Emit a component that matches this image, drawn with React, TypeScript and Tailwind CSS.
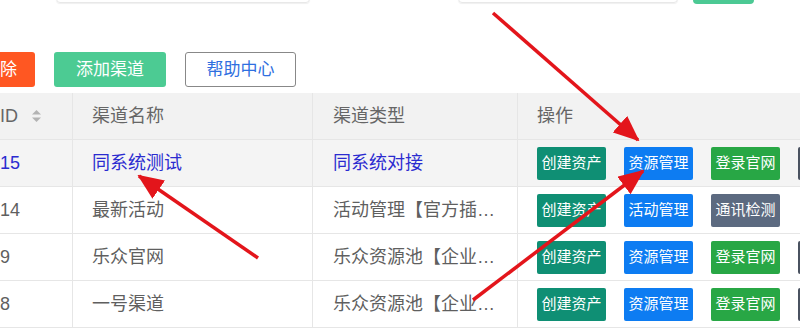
import React from "react";

type Btn = { label: string; color: string };

type Row = {
  id: string;
  name: string;
  type: string;
  active?: boolean;
  actions: Btn[];
  extra?: boolean;
};

const TEAL = "bg-[#0f8f74]";
const BLUE = "bg-[#0d7cf2]";
const GREEN = "bg-[#28a745]";
const SLATE = "bg-[#5c6a80]";

const rows: Row[] = [
  {
    id: "15",
    name: "同系统测试",
    type: "同系统对接",
    active: true,
    actions: [
      { label: "创建资产", color: TEAL },
      { label: "资源管理", color: BLUE },
      { label: "登录官网", color: GREEN },
    ],
    extra: true,
  },
  {
    id: "14",
    name: "最新活动",
    type: "活动管理【官方插件】",
    actions: [
      { label: "创建资产", color: TEAL },
      { label: "活动管理", color: BLUE },
      { label: "通讯检测", color: SLATE },
    ],
  },
  {
    id: "9",
    name: "乐众官网",
    type: "乐众资源池【企业版】",
    actions: [
      { label: "创建资产", color: TEAL },
      { label: "资源管理", color: BLUE },
      { label: "登录官网", color: GREEN },
    ],
    extra: true,
  },
  {
    id: "8",
    name: "一号渠道",
    type: "乐众资源池【企业版】",
    actions: [
      { label: "创建资产", color: TEAL },
      { label: "资源管理", color: BLUE },
      { label: "登录官网", color: GREEN },
    ],
    extra: true,
  },
];

function SortIcon() {
  return (
    <svg width="11" height="14" viewBox="0 0 11 14" className="ml-[13px]">
      <path d="M5.5 1 L10 5.5 H1 Z" fill="#b3b3b3" />
      <path d="M5.5 13 L10 8.5 H1 Z" fill="#b3b3b3" />
    </svg>
  );
}

function Arrows() {
  return (
    <svg
      className="pointer-events-none absolute left-0 top-0"
      width="800"
      height="334"
      viewBox="0 0 800 334"
    >
      <defs>
        <marker
          id="head"
          markerUnits="userSpaceOnUse"
          markerWidth="26"
          markerHeight="22"
          refX="24"
          refY="11"
          orient="auto"
        >
          <path d="M0 0 L26 11 L0 22 Z" fill="#e3151b" />
        </marker>
      </defs>
      <line x1="493" y1="13" x2="638" y2="140" stroke="#e3151b" strokeWidth="3.5" markerEnd="url(#head)" />
      <line x1="258" y1="258" x2="139" y2="176" stroke="#e3151b" strokeWidth="3.5" markerEnd="url(#head)" />
      <line x1="473" y1="300" x2="643" y2="171" stroke="#e3151b" strokeWidth="3.5" markerEnd="url(#head)" />
    </svg>
  );
}

export default function App() {
  const font = { fontFamily: '"Liberation Sans", "Noto Sans CJK SC", sans-serif' };
  return (
    <div
      className="relative h-[334px] w-[800px] overflow-hidden bg-white text-[#666]"
      style={font}
    >
      {/* search bar remnants */}
      <div className="flex h-[5px] items-end overflow-hidden">
        <div className="mb-[2px] ml-[56px] h-[36px] w-[254px] shrink-0 rounded-[4px] border border-[#e8e8e8] shadow-[0_1px_1px_#f0f0f0]" />
        <div className="mb-[2px] ml-[148px] h-[36px] w-[220px] shrink-0 rounded-[4px] border border-[#e8e8e8] shadow-[0_1px_1px_#f0f0f0]" />
        <div className="mb-[1px] ml-[15px] h-[36px] w-[61px] shrink-0 rounded-[4px] bg-[#4cc994]" />
      </div>

      {/* toolbar */}
      <div className="-ml-[35px] mt-[47px] flex gap-[19px]">
        <button className="h-[35px] w-[70px] rounded-[3px] bg-[#ff5722] text-[17px] text-white">
          删除
        </button>
        <button className="h-[35px] w-[112px] rounded-[3px] bg-[#4ccb93] text-[17px] text-white">
          添加渠道
        </button>
        <button className="h-[35px] w-[111px] rounded-[3px] border border-[#888] bg-white text-[17px] text-[#2f6fe0]">
          帮助中心
        </button>
      </div>

      {/* table */}
      <div className="-ml-[20px] mt-[6px] text-[18px]">
        <div className="grid h-[47px] grid-cols-[93px_240px_205px_1fr] border-b border-[#e6e6e6] bg-[#f2f2f2] text-[#666]">
          <div className="flex items-center border-r border-[#e6e6e6] pl-[20px]">
            ID
            <SortIcon />
          </div>
          <div className="flex items-center border-r border-[#e6e6e6] pl-[19px]">渠道名称</div>
          <div className="flex items-center border-r border-[#e6e6e6] pl-[20px]">渠道类型</div>
          <div className="flex items-center pl-[19px]">操作</div>
        </div>
        {rows.map((r) => (
          <div
            key={r.id}
            className={`grid h-[47px] grid-cols-[93px_240px_205px_1fr] border-b border-[#e6e6e6] ${
              r.active ? "bg-[#f4f4f4] text-[#2b2bd0]" : "bg-white text-[#5f5f5f]"
            }`}
          >
            <div className="flex items-center border-r border-[#e6e6e6] pl-[20px]">{r.id}</div>
            <div className="flex items-center border-r border-[#e6e6e6] pl-[19px]">{r.name}</div>
            <div className="flex min-w-0 items-center border-r border-[#e6e6e6] pl-[20px] pr-[19px]">
              <span className="truncate">{r.type}</span>
            </div>
            <div className="flex items-center gap-[18px] whitespace-nowrap pl-[19px]">
              {r.actions.map((a, i) => (
                <span
                  key={i}
                  className={`flex h-[33px] w-[69px] shrink-0 items-center justify-center rounded-[2px] text-[15px] text-white ${a.color}`}
                >
                  {a.label}
                </span>
              ))}
              {r.extra && <span className="h-[33px] w-[69px] shrink-0 rounded-[2px] bg-[#4a5260]" />}
            </div>
          </div>
        ))}
      </div>

      <Arrows />
    </div>
  );
}
